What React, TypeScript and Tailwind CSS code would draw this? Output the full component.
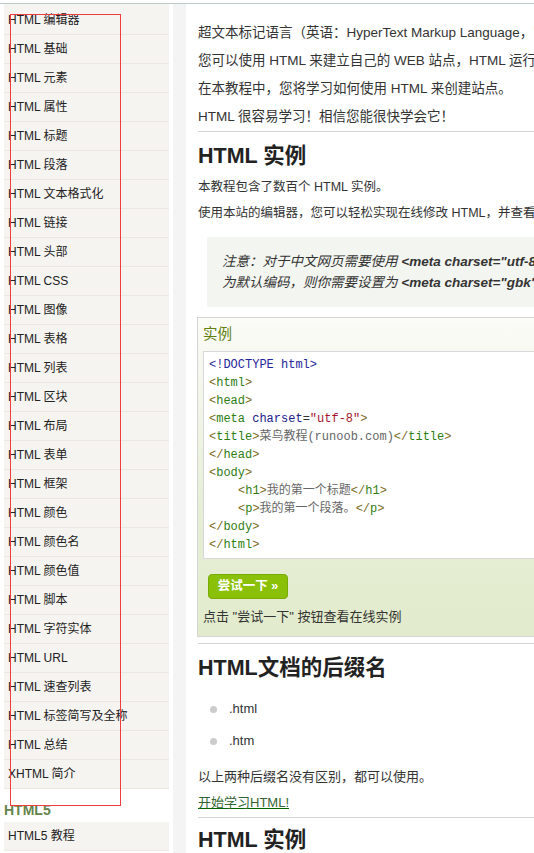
import React from "react";

const items = [
  "HTML 编辑器","HTML 基础","HTML 元素","HTML 属性","HTML 标题","HTML 段落","HTML 文本格式化","HTML 链接","HTML 头部","HTML CSS","HTML 图像","HTML 表格","HTML 列表","HTML 区块","HTML 布局","HTML 表单","HTML 框架","HTML 颜色","HTML 颜色名","HTML 颜色值","HTML 脚本","HTML 字符实体","HTML URL","HTML 速查列表","HTML 标签简写及全称","HTML 总结","XHTML 简介",
];

const T = ({ c }: { c: string }) => <span className="text-[#2e7d14]">{c}</span>;
const P = ({ c }: { c: string }) => <span className="text-[#7a6a1a]">{c}</span>;
const Tag = ({ n, close }: { n: string; close?: boolean }) => (
  <>
    <P c={close ? "</" : "<"} />
    <T c={n} />
    <P c=">" />
  </>
);

export default function App() {
  const font = { fontFamily: '"Liberation Sans", "Noto Sans CJK SC", sans-serif' };
  return (
    <div className="relative w-[534px] h-[853px] overflow-hidden bg-white text-[#333]" style={font}>
      <div className="h-[3px] bg-white" />
      <div className="h-[1px] bg-[#b9cccb]" />
      <div className="flex h-[849px]">
        {/* sidebar */}
        <div className="w-[169px] pl-[4px] shrink-0 flex flex-col">
          <div className="bg-[#f6f4f0] pt-[2px]">
            {items.map((it) => (
              <div key={it} className="h-[29px] border-b border-[#ebe8e2] pl-[4px] text-[12px] leading-[28px] text-[#222] whitespace-nowrap">
                {it}
              </div>
            ))}
          </div>
          <div className="h-[33px] pt-[13px] text-[14px] font-bold leading-[16px] text-[#64854c]">HTML5</div>
          <div className="h-[29px] bg-[#f6f4f0] pl-[4px] text-[12px] leading-[29px] text-[#222] border-b border-[#ebe8e2]">HTML5 教程</div>
        </div>
        <div className="w-[4px] shrink-0" />
        <div className="w-[13px] shrink-0 bg-[#f4f4f4]" />
        {/* content */}
        <div className="flex-1 min-w-0 overflow-hidden pl-[12px] whitespace-nowrap">
          <div className="w-[460px]">
            <div className="pt-[15px] text-[13.5px] text-[#333]">
              <p className="leading-[28px]">超文本标记语言（英语：HyperText Markup Language，简称：HTML）是一种用于创建网页的标准标记语言。</p>
              <p className="leading-[28px]">您可以使用 HTML 来建立自己的 WEB 站点，HTML 运行在浏览器上，由浏览器来解析。</p>
              <p className="leading-[28px]">在本教程中，您将学习如何使用 HTML 来创建站点。</p>
              <p className="leading-[28px]">HTML 很容易学习！相信您能很快学会它！</p>
            </div>
            <div className="h-[1px] bg-[#d4d4d4]" />
            <h2 className="mt-[9px] text-[21.5px] font-bold leading-[30px] text-[#222]">HTML 实例</h2>
            <p className="mt-[4px] text-[12.5px] leading-[24px]">本教程包含了数百个 HTML 实例。</p>
            <p className="mt-[2px] text-[12.5px] leading-[24px]">使用本站的编辑器，您可以轻松实现在线修改 HTML，并查看修改后的结果。</p>
            <div className="mt-[12px] ml-[9px] h-[70px] bg-[#f3f5f0] pl-[15px] py-[14px] text-[13.5px] italic leading-[21px] text-[#333]">
              <p>注意：对于中文网页需要使用 <b>&lt;meta charset="utf-8"&gt;</b> 声明编码，否则会出现乱码。有些浏览器会设置 GBK</p>
              <p>为默认编码，则你需要设置为 <b>&lt;meta charset="gbk"&gt;</b>。</p>
            </div>
            {/* example */}
            <div className="mt-[10px] -ml-[1px] h-[320px] border border-[#d6d6d6] pl-[5px] bg-linear-to-b from-[#fbfbf7] via-[#e6eed6] via-60% to-[#e2ebcc]">
              <div className="h-[33px] leading-[33px] text-[14.5px] text-[#617f10]">实例</div>
              <div className="h-[208px] border border-[#d8d8d8] bg-white pl-[5px] py-[4px] text-[12px] leading-[18px]" style={{ fontFamily: '"Liberation Mono", "Noto Sans CJK SC", monospace' }}>
                <div className="text-[#25259a]">&lt;!DOCTYPE html&gt;</div>
                <div><Tag n="html" /></div>
                <div><Tag n="head" /></div>
                <div>
                  <P c="<" /><T c="meta" /> <span className="text-[#20208a]">charset</span><span className="text-[#333]">=</span><span className="text-[#a3152a]">"utf-8"</span><P c=">" />
                </div>
                <div><Tag n="title" /><span className="text-[#666]">菜鸟教程(runoob.com)</span><Tag n="title" close /></div>
                <div><Tag n="head" close /></div>
                <div><Tag n="body" /></div>
                <div className="pl-[29px]"><Tag n="h1" /><span className="text-[#666]">我的第一个标题</span><Tag n="h1" close /></div>
                <div className="pl-[29px]"><Tag n="p" /><span className="text-[#666]">我的第一个段落。</span><Tag n="p" close /></div>
                <div><Tag n="body" close /></div>
                <div><Tag n="html" close /></div>
              </div>
              <div className="mt-[15px] ml-[5px] w-[80px] h-[25px] rounded-[4px] bg-[#8ac007] border border-[#7aaa05] text-white text-[12.5px] font-bold leading-[23px] text-center">尝试一下 »</div>
              <p className="mt-[8px] text-[13px] leading-[20px] text-[#333]">点击 "尝试一下" 按钮查看在线实例</p>
            </div>
            <div className="mt-[6px] h-[1px] bg-[#d4d4d4]" />
            <h2 className="mt-[9px] text-[21.5px] font-bold leading-[30px] text-[#222]">HTML文档的后缀名</h2>
            <ul className="mt-[10px] text-[13px]">
              <li className="flex items-center h-[32px]"><span className="ml-[12px] w-[7px] h-[7px] rounded-full bg-[#cccccc]" /><span className="ml-[12px]">.html</span></li>
              <li className="flex items-center h-[32px]"><span className="ml-[12px] w-[7px] h-[7px] rounded-full bg-[#cccccc]" /><span className="ml-[12px]">.htm</span></li>
            </ul>
            <p className="mt-[8px] text-[13px] leading-[24px]">以上两种后缀名没有区别，都可以使用。</p>
            <p className="mt-[2px] text-[13px] leading-[24px]"><a className="text-[#336633] underline decoration-[#006400]">开始学习HTML!</a></p>
            <div className="mt-[2px] h-[1px] bg-[#d4d4d4]" />
            <h2 className="mt-[7px] text-[21.5px] font-bold leading-[30px] text-[#222]">HTML 实例</h2>
          </div>
        </div>
      </div>
      <div className="absolute left-[10px] top-[14px] w-[111px] h-[792px] border border-[#f03c3c]" />
    </div>
  );
}
